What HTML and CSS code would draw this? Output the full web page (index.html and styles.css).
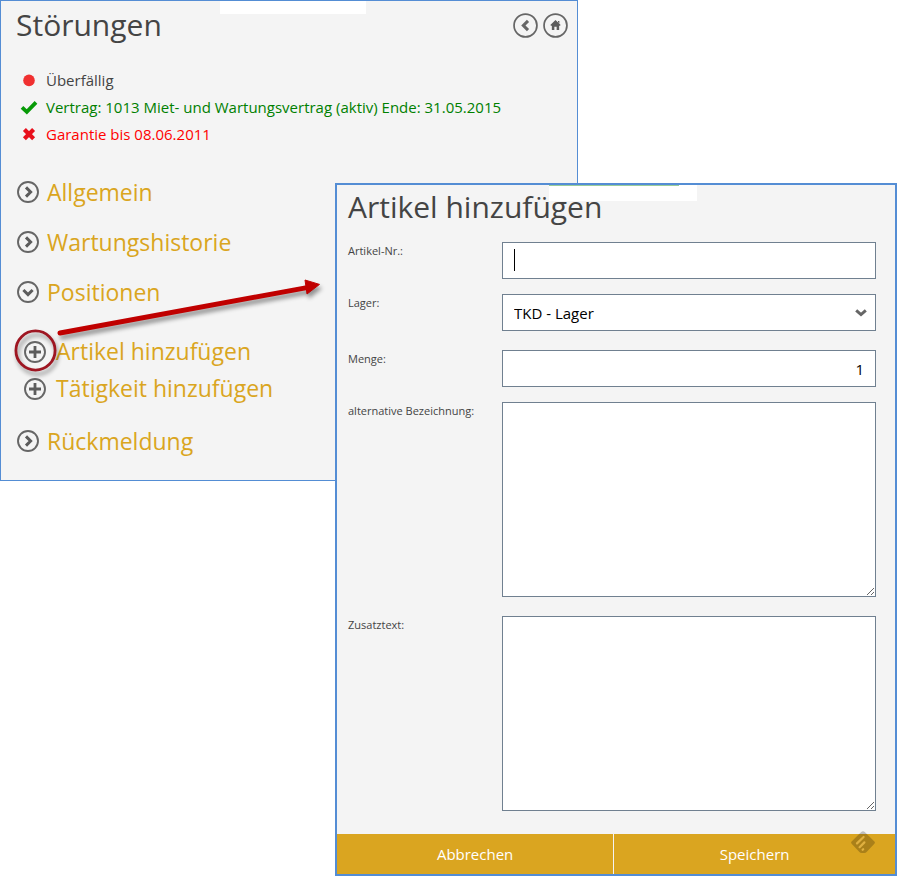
FILE: index.html
```html
<!DOCTYPE html>
<html lang="de">
<head>
    <meta charset="UTF-8">
    <meta name="viewport" content="width=device-width, initial-scale=1.0">
    <title>Störungen</title>
    <link rel="stylesheet" href="styles.css">
</head>
<body>
    <!-- Icons -->
    <svg class="sprite" aria-hidden="true">
        <symbol id="icon-right" viewBox="0 0 22 22">
            <circle cx="11" cy="11" r="10" fill="none" stroke="#666" stroke-width="1.9"/>
            <path d="M9 6.4 13.6 11 9 15.6" fill="none" stroke="#5c5c5c" stroke-width="3"/>
        </symbol>
        <symbol id="icon-down" viewBox="0 0 22 22">
            <circle cx="11" cy="11" r="10" fill="none" stroke="#666" stroke-width="1.9"/>
            <path d="M6.4 9 11 13.6 15.6 9" fill="none" stroke="#5c5c5c" stroke-width="3"/>
        </symbol>
        <symbol id="icon-plus" viewBox="0 0 22 22">
            <circle cx="11" cy="11" r="10" fill="none" stroke="#666" stroke-width="1.9"/>
            <path d="M11 5v12M5 11h12" fill="none" stroke="#5c5c5c" stroke-width="2.8"/>
        </symbol>
    </svg>

    <main class="stage">
        <section class="window panel">
            <div class="patch"></div>
            <header class="panel-header">
                <h1>Störungen</h1>
                <nav class="nav-buttons">
                    <button type="button" aria-label="Zurück">
                        <svg viewBox="0 0 26 26">
                            <circle cx="13" cy="13" r="11.9"/>
                            <path d="M15.6 8.2 10.8 13l4.8 4.8" fill="none" stroke="#666" stroke-width="3.2"/>
                        </svg>
                    </button>
                    <button type="button" aria-label="Startseite">
                        <svg viewBox="0 0 26 26">
                            <circle cx="13" cy="13" r="11.9"/>
                            <path d="M13 7.4 18.4 12.6 17.6 13.2H16.8V17.6H14.2V14.4H11.8V17.6H9.2V13.2H8.4L7.6 12.6ZM15.6 8.2h1.4v2.6l-1.4-1.4z" fill="#5c5c5c"/>
                        </svg>
                    </button>
                </nav>
            </header>

            <ul class="status-list">
                <li>
                    <svg viewBox="0 0 18 18"><circle cx="9" cy="8.4" r="5.8" fill="#f03030"/></svg>
                    <span>Überfällig</span>
                </li>
                <li class="ok">
                    <svg viewBox="0 0 18 18"><path d="M2 8.4 6.8 12.8 16 3.4" fill="none" stroke="#079a07" stroke-width="3.8"/></svg>
                    <span>Vertrag: 1013 Miet- und Wartungsvertrag (aktiv) Ende: 31.05.2015</span>
                </li>
                <li class="expired">
                    <svg viewBox="0 0 18 18"><path d="M4.4 3.6 13.6 12.8M13.6 3.6 4.4 12.8" fill="none" stroke="#e8101c" stroke-width="4.2"/></svg>
                    <span>Garantie bis 08.06.2011</span>
                </li>
            </ul>

            <ul class="sections">
                <li><a href="#allgemein"><svg><use href="#icon-right"/></svg>Allgemein</a></li>
                <li><a href="#historie"><svg><use href="#icon-right"/></svg>Wartungshistorie</a></li>
                <li>
                    <a href="#positionen"><svg><use href="#icon-down"/></svg>Positionen</a>
                    <ul class="actions">
                        <li><a href="#artikel"><svg><use href="#icon-plus"/></svg>Artikel hinzufügen</a></li>
                        <li><a href="#taetigkeit"><svg><use href="#icon-plus"/></svg>Tätigkeit hinzufügen</a></li>
                    </ul>
                </li>
                <li><a href="#rueckmeldung"><svg><use href="#icon-right"/></svg>Rückmeldung</a></li>
            </ul>

            <!-- Marker and arrow pointing to the dialog -->
            <svg class="arrow" viewBox="0 0 330 110" aria-hidden="true">
                <circle cx="34.5" cy="80.5" r="19.6" fill="none" stroke="#9e1622" stroke-width="2.8"/>
                <path d="M59 63 306 17.6" stroke="#c00000" stroke-width="5" stroke-linecap="round"/>
                <path d="M304 10 318.5 14.4 306 24Z" fill="#c00000" stroke="#c00000"/>
            </svg>
        </section>

        <section class="window dialog" id="artikel">
            <div class="patch"></div>
            <h1>Artikel hinzufügen</h1>
            <form>
                <div class="fields">
                    <label for="artikelnr">Artikel-Nr.:</label>
                    <div class="control">
                        <input type="text" id="artikelnr">
                        <span class="caret"></span>
                    </div>

                    <label for="lager">Lager:</label>
                    <div class="control spaced">
                        <select id="lager">
                            <option>TKD - Lager</option>
                        </select>
                        <svg class="chevron" viewBox="0 0 12 8"><path d="M1.2 1.4 6 5.6l4.8-4.2" fill="none" stroke="#666" stroke-width="3"/></svg>
                    </div>

                    <label for="menge">Menge:</label>
                    <div class="control">
                        <input type="text" id="menge" class="amount" value="1">
                    </div>

                    <label for="bezeichnung">alternative Bezeichnung:</label>
                    <div class="control spaced">
                        <textarea id="bezeichnung"></textarea>
                    </div>

                    <label for="zusatztext">Zusatztext:</label>
                    <div class="control">
                        <textarea id="zusatztext"></textarea>
                    </div>
                </div>
                <footer class="buttons">
                    <button type="button">Abbrechen</button>
                    <button type="submit">Speichern</button>
                    <svg class="badge" viewBox="0 0 24 22" aria-hidden="true">
                        <path d="M10.2 1Q12 -.4 13.8 1L23.4 10.4Q24.4 11.6 23.4 12.8L15.6 21Q14.8 22 13.4 22H10.6Q9.2 22 8.4 21L.6 12.8Q-.4 11.6 .6 10.4Z" fill="#000" opacity=".22"/>
                        <path d="M6 12.4 12.6 6M8.6 16.2 13.4 11.4M11.6 18.8 12.2 18.2" fill="none" stroke="#e0b040" stroke-width="2.2" stroke-linecap="round"/>
                    </svg>
                </footer>
            </form>
        </section>
    </main>
</body>
</html>
```

FILE: styles.css
```css
* {
    box-sizing: border-box;
}

body {
    margin: 0;
    background: #fff;
    color: #444;
    font-family: "Segoe UI", "Open Sans", sans-serif;
    font-size: 15px;
}

h1 {
    margin: 0;
    font-size: 30px;
    font-weight: 400;
    line-height: 44px;
}

ul {
    list-style: none;
    margin: 0;
    padding: 0;
}

svg {
    flex: none;
}

.sprite {
    display: none;
}

/* Both windows share one grid cell and overlap */
.stage {
    display: grid;
}

.window {
    grid-area: 1 / 1;
    position: relative;
    background: #f4f4f4;
    border: 1px solid #548dd4;
}

.patch {
    position: absolute;
    background: #fff;
}

.panel {
    align-self: start;
    width: 64%;
    padding: 2px 9px 14px 15px;
}

.panel .patch {
    top: 0;
    left: 38%;
    width: 146px;
    height: 13px;
}

.panel-header {
    display: flex;
    justify-content: space-between;
    align-items: center;
}

.nav-buttons {
    display: flex;
    gap: 5px;
}

.nav-buttons button {
    display: flex;
    padding: 0;
    border: none;
    background: none;
    cursor: pointer;
}

.nav-buttons svg {
    width: 25px;
    height: 25px;
}

.nav-buttons circle {
    fill: none;
    stroke: #666;
    stroke-width: 1.8;
}

.status-list {
    margin-top: 20px;
    padding-left: 4px;
}

.status-list li {
    display: flex;
    align-items: center;
    gap: 8px;
    line-height: 27px;
}

.status-list svg {
    width: 18px;
    height: 18px;
}

.ok {
    color: #008000;
}

.expired {
    color: #f00;
}

.sections {
    margin-top: 19px;
    padding-left: 1px;
}

.sections a {
    display: flex;
    align-items: center;
    gap: 8px;
    color: #daa520;
    font-size: 23px;
    line-height: 50px;
    text-decoration: none;
}

.sections svg {
    width: 22px;
    height: 22px;
}

.actions {
    padding: 16px 0 9px 7px;
}

.actions a {
    gap: 10px;
    line-height: 37px;
}

.arrow {
    position: absolute;
    top: 269px;
    left: 0;
    width: 330px;
    height: 110px;
    filter: drop-shadow(2px 4px 2px rgba(0, 0, 0, 0.4));
    pointer-events: none;
}

.dialog {
    margin: 183px 6px 0 37.1%;
    border-width: 2px;
}

.dialog .patch {
    top: 0;
    left: 38%;
    width: 148px;
    height: 16px;
}

.dialog .patch::before {
    content: "";
    display: block;
    width: 130px;
    height: 1px;
    background: #9c9;
}

.dialog h1 {
    padding-left: 11px;
}

.fields {
    display: grid;
    grid-template-columns: 154px 1fr;
    row-gap: 15px;
    padding: 13px 19px 23px 11px;
}

.fields label {
    font-size: 11px;
    line-height: 18px;
}

.control {
    display: flex;
    position: relative;
}

.spaced {
    margin-bottom: 4px;
}

.control input,
.control select,
.control textarea {
    width: 100%;
    height: 37px;
    padding: 0 11px;
    border: 1px solid #708090;
    border-radius: 0;
    background: #fff;
    color: #000;
    font: inherit;
    appearance: none;
}

.control textarea {
    height: 195px;
    padding: 8px 11px;
}

.control .amount {
    text-align: right;
}

.caret {
    position: absolute;
    top: 7px;
    left: 12px;
    width: 1px;
    height: 22px;
    background: #000;
}

.chevron {
    position: absolute;
    top: 15px;
    right: 9px;
    width: 12px;
    height: 8px;
}

.buttons {
    display: grid;
    grid-template-columns: 49.5% 1fr;
    position: relative;
    gap: 1px;
    background: #f4f4f4;
}

.buttons button {
    height: 40px;
    border: none;
    background: #daa520;
    color: #fff;
    font: inherit;
    cursor: pointer;
}

.badge {
    position: absolute;
    top: -3px;
    right: 20px;
    width: 24px;
    height: 22px;
}
```
